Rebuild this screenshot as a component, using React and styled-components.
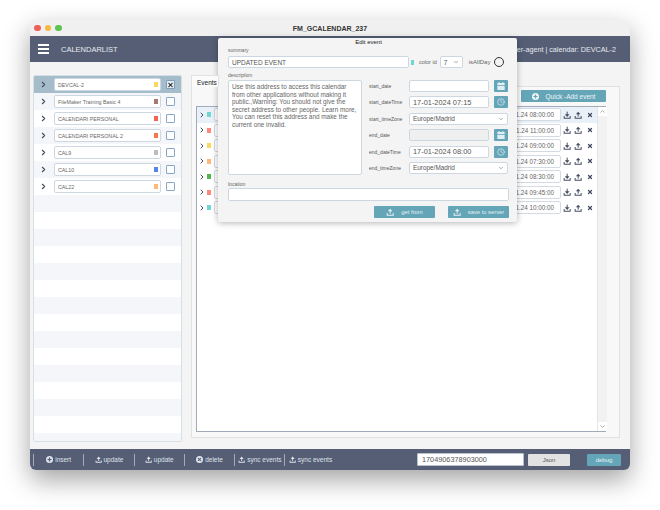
import React from 'react';
import styled, { createGlobalStyle } from 'styled-components';
import { ChevronRight, ChevronDown, ChevronUp, X, Clock } from 'lucide-react';

const GlobalStyle = createGlobalStyle`
  html, body {
    margin: 0;
    padding: 0;
    background: #fff;
    font-family: "Liberation Sans", Arial, sans-serif;
  }
`;

const Page = styled.div`
  width: 660px;
  height: 510px;
  padding: 20px 30px 40px;
  box-sizing: border-box;
  overflow: hidden;
`;

const Window = styled.div`
  position: relative;
  width: 600px;
  height: 450px;
  display: flex;
  flex-direction: column;
  background: #f4f4f4;
  border-radius: 6px;
  box-shadow: 0 10px 26px rgba(0, 0, 0, 0.36);
  overflow: hidden;
`;

const TitleBar = styled.div`
  position: relative;
  height: 16px;
  flex: none;
  display: flex;
  align-items: center;
  justify-content: center;
  background: #f0f0f0;
  font-size: 7px;
  font-weight: bold;
  color: #333;
`;

const Lights = styled.div`
  position: absolute;
  left: 4px;
  top: 4.5px;
  display: flex;
  gap: 4px;
`;

const Light = styled.span`
  width: 6.5px;
  height: 6.5px;
  border-radius: 50%;
  background: ${(p) => p.$color};
`;

const Header = styled.div`
  height: 26px;
  flex: none;
  display: flex;
  align-items: center;
  padding: 0 14px 0 8px;
  background: #555e75;
  color: #e8ebf0;
`;

const Burger = styled.div`
  width: 11px;
  display: flex;
  flex-direction: column;
  gap: 2px;
  margin-right: 12px;
  span {
    height: 2px;
    background: #fff;
  }
`;

const HeaderTitle = styled.div`
  font-size: 7.5px;
  flex: 1;
`;

const HeaderInfo = styled.div`
  font-size: 7.2px;
`;

const Body = styled.div`
  flex: 1;
  display: flex;
  min-height: 0;
  padding: 13px 10px 7px 3px;
  gap: 9px;
`;

const ListPanel = styled.div`
  width: 149px;
  height: 367px;
  flex: none;
  box-sizing: border-box;
  background: #fff;
  border: 1px solid #d5dfe6;
  border-radius: 2px;
  overflow: hidden;
`;

const CalRow = styled.div`
  height: 17px;
  display: flex;
  align-items: center;
  padding-left: 5px;
  background: ${(p) => (p.$active ? '#a5bccb' : p.$striped ? '#f4f6f9' : '#fff')};
`;

const Arrow = styled(ChevronRight)`
  flex: none;
  color: #474f64;
`;

const CalName = styled.div`
  width: 107px;
  height: 13px;
  margin-left: 6px;
  box-sizing: border-box;
  display: flex;
  align-items: center;
  justify-content: space-between;
  padding: 0 2px 0 3px;
  background: #fff;
  border: 1px solid #cdd7e2;
  border-radius: 2px;
  font-size: 5.3px;
  color: #666;
`;

const Swatch = styled.span`
  width: ${(p) => p.$w || 4}px;
  height: ${(p) => p.$h || 5}px;
  margin-left: ${(p) => p.$ml || 0}px;
  flex: none;
  background: ${(p) => p.$color};
`;

const Check = styled.div`
  width: 9px;
  height: 9px;
  margin-left: 5px;
  display: flex;
  align-items: center;
  justify-content: center;
  box-sizing: border-box;
  background: ${(p) => (p.$on ? '#e4e9ee' : '#fff')};
  border: 1px solid ${(p) => (p.$on ? '#7f9dbd' : '#8aa6c8')};
  border-radius: 1px;
  color: #111;
`;

const EventsPanel = styled.div`
  width: 429px;
  height: 363px;
  flex: none;
  display: flex;
  flex-direction: column;
`;

const Tab = styled.div`
  width: 28px;
  height: 12px;
  flex: none;
  box-sizing: border-box;
  padding: 3px 0 0 5px;
  margin-bottom: -1px;
  position: relative;
  z-index: 1;
  background: #fbfbfb;
  border: 1px solid #dfe2e5;
  border-bottom: none;
  font-size: 6.5px;
  line-height: 7px;
  color: #222;
`;

const TabBody = styled.div`
  flex: 1;
  box-sizing: border-box;
  display: flex;
  flex-direction: column;
  padding: 3px 13px 5px 4px;
  border: 1px solid #dfe2e5;
  background: #f8f8f8;
`;

const TabTools = styled.div`
  height: 16px;
  flex: none;
  display: flex;
  justify-content: flex-end;
  align-items: flex-start;
`;

const QuickAdd = styled.div`
  width: 85px;
  height: 12px;
  display: flex;
  align-items: center;
  justify-content: center;
  gap: 7px;
  background: #64a5b8;
  border-radius: 1px;
  color: #eef5f7;
  font-size: 6.5px;
`;

const EventsBox = styled.div`
  flex: 1;
  box-sizing: border-box;
  display: flex;
  background: #fff;
  border: 1px solid #a3abbb;
`;

const EventList = styled.div`
  flex: 1;
`;

const EventRow = styled.div`
  height: 15.5px;
  display: flex;
  align-items: center;
  padding-left: 1px;
  background: ${(p) => (p.$active ? '#e9f0f8' : '#fff')};
`;

const EventStart = styled.div`
  width: 347px;
  height: 13px;
  margin-left: 3px;
  box-sizing: border-box;
  display: flex;
  align-items: center;
  justify-content: flex-end;
  padding-right: 6px;
  background: #fff;
  border: 1px solid #d3dae3;
  border-radius: 2px;
  font-size: 6.3px;
  color: #666;
`;

const RowActions = styled.div`
  width: 36px;
  flex: none;
  display: flex;
  align-items: center;
  padding-left: 2px;
  box-sizing: border-box;
  gap: 3px;
  color: #454d61;
`;

const RowRemove = styled(X)`
  margin-left: 2px;
`;

const ScrollTrack = styled.div`
  width: 9px;
  flex: none;
  display: flex;
  flex-direction: column;
  justify-content: space-between;
  align-items: center;
  background: #f2f2f2;
  border-left: 1px solid #e4e4e4;
  color: #777;
`;

const ScrollEnd = styled.div`
  width: 100%;
  height: 9px;
  display: flex;
  align-items: center;
  justify-content: center;
  background: #fff;
`;

const Footer = styled.div`
  height: 21px;
  flex: none;
  display: flex;
  align-items: center;
  padding-left: 3px;
  background: #555e75;
  color: #dfe3ea;
`;

const FootItem = styled.div`
  width: ${(p) => p.$w || 50.3}px;
  height: 12px;
  box-sizing: border-box;
  display: flex;
  align-items: center;
  justify-content: center;
  gap: 2px;
  border-left: 1px solid #a5abb9;
  font-size: 6.5px;
  &:last-of-type {
    border-right: 1px solid #a5abb9;
  }
`;

const FootSpacer = styled.div`
  flex: 1;
`;

const StampInput = styled.div`
  width: 107px;
  height: 13px;
  box-sizing: border-box;
  display: flex;
  align-items: center;
  padding-left: 4px;
  background: #fff;
  border: 1px solid #b9c1cf;
  border-radius: 1px;
  font-size: 7.3px;
  color: #555;
`;

const JsonButton = styled.div`
  width: 42px;
  height: 12px;
  margin-left: 4px;
  display: flex;
  align-items: center;
  justify-content: center;
  background: #e2e2e2;
  border-radius: 1px;
  font-size: 6px;
  color: #555;
`;

const DebugButton = styled.div`
  width: 34px;
  height: 12px;
  margin: 0 9px 0 17px;
  display: flex;
  align-items: center;
  justify-content: center;
  background: #64a5b8;
  border-radius: 1px;
  font-size: 6px;
  color: #e8f2f5;
`;

const Modal = styled.div`
  position: absolute;
  left: 188px;
  top: 18px;
  width: 299px;
  height: 184px;
  box-sizing: border-box;
  padding: 1px 8px 0 10px;
  background: #f4f4f4;
  border-radius: 2px;
  box-shadow: 0 1px 6px rgba(0, 0, 0, 0.3);
  color: #666;
`;

const ModalTitle = styled.div`
  height: 8px;
  line-height: 7px;
  text-align: center;
  font-size: 6px;
  color: #222;
`;

const SmallLabel = styled.div`
  font-size: 5px;
  line-height: 7px;
  height: 7px;
  color: #666;
`;

const TopRow = styled.div`
  display: flex;
  align-items: center;
  height: 12px;
  margin-top: 2px;
`;

const Field = styled.div`
  width: ${(p) => p.$w}px;
  height: ${(p) => p.$h || 12}px;
  margin-left: ${(p) => p.$ml || 0}px;
  flex: none;
  box-sizing: border-box;
  display: flex;
  align-items: center;
  justify-content: space-between;
  padding: 0 3px;
  background: ${(p) => (p.$disabled ? '#efefef' : '#fff')};
  border: 1px solid #cdd7e2;
  border-radius: 2px;
  font-size: ${(p) => p.$size || 6.5}px;
  color: #555;
`;

const InlineLabel = styled.span`
  font-size: ${(p) => p.$size || 5.5}px;
  color: #666;
  margin-left: ${(p) => p.$ml || 0}px;
`;

const Circle = styled.span`
  width: 10px;
  height: 10px;
  margin-left: 4px;
  flex: none;
  box-sizing: border-box;
  border: 1px solid #333;
  border-radius: 50%;
`;

const FormBody = styled.div`
  display: flex;
  margin-top: 4px;
`;

const DescColumn = styled.div`
  width: 134px;
  flex: none;
`;

const DescText = styled.div`
  height: 95px;
  margin-top: 1px;
  box-sizing: border-box;
  padding: 2px 3px;
  background: #fff;
  border: 1px solid #cdd7e2;
  border-radius: 2px;
  font-size: 6.4px;
  line-height: 7.6px;
  color: #666;
`;

const SideColumn = styled.div`
  flex: 1;
  display: flex;
  flex-direction: column;
  gap: 4.4px;
  padding: 8px 0 0 7px;
`;

const SideRow = styled.div`
  height: 12px;
  display: flex;
  align-items: center;
`;

const SideLabel = styled.span`
  width: 40px;
  flex: none;
  font-size: 5px;
  color: #555;
`;

const IconButton = styled.div`
  width: 14px;
  height: 12px;
  margin-left: 5px;
  flex: none;
  display: flex;
  align-items: center;
  justify-content: center;
  background: #64a5b8;
  border-radius: 1px;
  color: #dfeff3;
`;

const LocationBlock = styled.div`
  margin-top: 6px;
`;

const ModalActions = styled.div`
  display: flex;
  justify-content: flex-end;
  gap: 13px;
  margin-top: 5px;
`;

const ActionButton = styled.div`
  width: 61px;
  height: 12px;
  display: flex;
  align-items: center;
  justify-content: center;
  gap: 7px;
  background: #64a5b8;
  border-radius: 1px;
  font-size: 5.8px;
  color: #e6f1f4;
`;

const UploadIcon = ({ size = 8, down }) => (
  <svg width={size} height={size} viewBox="0 0 24 24" fill="currentColor" aria-hidden="true">
    <rect x="11" y={down ? 2 : 6} width="3" height="11" />
    {down ? <path d="M5.5 10h14l-7 8z" /> : <path d="M5.5 10h14l-7-8z" />}
    <path d="M2 15h3v5h15v-5h3v8H2z" />
  </svg>
);

const PlusCircle = ({ size = 7, cut = '#555e75' }) => (
  <svg width={size} height={size} viewBox="0 0 24 24" aria-hidden="true">
    <circle cx="12" cy="12" r="12" fill="currentColor" />
    <path d="M10 5h4v5h5v4h-5v5h-4v-5H5v-4h5z" fill={cut} />
  </svg>
);

const CrossCircle = ({ size = 7 }) => (
  <svg width={size} height={size} viewBox="0 0 24 24" aria-hidden="true">
    <circle cx="12" cy="12" r="12" fill="currentColor" />
    <path d="M7 7l10 10M17 7L7 17" stroke="#555e75" strokeWidth="3.5" />
  </svg>
);

const CalendarIcon = () => (
  <svg width="8" height="8" viewBox="0 0 24 24" fill="currentColor" aria-hidden="true">
    <rect x="5" y="0" width="3" height="5" />
    <rect x="16" y="0" width="3" height="5" />
    <path d="M1 3h22v6H1zM1 11h22v13H1z" />
  </svg>
);

const calendars = [
  { name: 'DEVCAL-2', color: '#fbd75b', active: true },
  { name: 'FileMaker Training Basic 4', color: '#a47a6e', striped: true },
  { name: 'CALENDARI PERSONAL', color: '#f4664f' },
  { name: 'CALENDARI PERSONAL 2', color: '#f4794f', striped: true },
  { name: 'CAL9', color: '#bdbdbd' },
  { name: 'CAL10', color: '#5484ed', striped: true },
  { name: 'CAL22', color: '#ffb878' },
];

const events = [
  { color: '#6fd6d6', time: '1.24 08:00:00', active: true },
  { color: '#ff887c', time: '1.24 11:00:00' },
  { color: '#fbd75b', time: '1.24 09:00:00' },
  { color: '#ffb878', time: '1.24 07:30:00' },
  { color: '#51b749', time: '1.24 08:30:00' },
  { color: '#ff887c', time: '1.24 09:45:00' },
  { color: '#6fd6d6', time: '1.24 10:00:00' },
];

const emptyRows = Array.from({ length: 15 }, (_, i) => i);

const description =
  'Use this address to access this calendar from other applications without making it public.,Warning: You should not give the secret address to other people. Learn more, You can reset this address and make the current one invalid.';

export default function App() {
  return (
    <Page>
      <GlobalStyle />
      <Window>
        <TitleBar>
          <Lights>
            <Light $color="#ee5f57" />
            <Light $color="#f6b83d" />
            <Light $color="#5fc34f" />
          </Lights>
          FM_GCALENDAR_237
        </TitleBar>

        <Header>
          <Burger>
            <span />
            <span />
            <span />
          </Burger>
          <HeaderTitle>CALENDARLIST</HeaderTitle>
          <HeaderInfo>user-agent | calendar: DEVCAL-2</HeaderInfo>
        </Header>

        <Body>
          <ListPanel>
            {calendars.map((cal) => (
              <CalRow key={cal.name} $active={cal.active} $striped={cal.striped}>
                <Arrow size={9} strokeWidth={3} />
                <CalName>
                  {cal.name}
                  <Swatch $color={cal.color} />
                </CalName>
                <Check $on={cal.active}>{cal.active && <X size={8} strokeWidth={3.5} />}</Check>
              </CalRow>
            ))}
            {emptyRows.map((i) => (
              <CalRow key={i} $striped={i % 2 === 0} />
            ))}
          </ListPanel>

          <EventsPanel>
            <Tab>Events</Tab>
            <TabBody>
              <TabTools>
                <QuickAdd>
                  <PlusCircle cut="#64a5b8" />
                  Quick -Add event
                </QuickAdd>
              </TabTools>
              <EventsBox>
                <EventList>
                  {events.map((ev) => (
                    <EventRow key={ev.time} $active={ev.active}>
                      <Arrow size={8} strokeWidth={3} />
                      <Swatch $color={ev.color} $ml={1} />
                      <EventStart>{ev.time}</EventStart>
                      <RowActions>
                        <UploadIcon size={8} down />
                        <UploadIcon size={8} />
                        <RowRemove size={6} strokeWidth={5} />
                      </RowActions>
                    </EventRow>
                  ))}
                </EventList>
                <ScrollTrack>
                  <ScrollEnd>
                    <ChevronUp size={7} />
                  </ScrollEnd>
                  <ScrollEnd>
                    <ChevronDown size={7} />
                  </ScrollEnd>
                </ScrollTrack>
              </EventsBox>
            </TabBody>
          </EventsPanel>
        </Body>

        <Footer>
          <FootItem>
            <PlusCircle /> insert
          </FootItem>
          <FootItem>
            <UploadIcon size={7} /> update
          </FootItem>
          <FootItem>
            <UploadIcon size={7} /> update
          </FootItem>
          <FootItem>
            <CrossCircle /> delete
          </FootItem>
          <FootItem>
            <UploadIcon size={7} /> sync events
          </FootItem>
          <FootItem $w={51}>
            <UploadIcon size={7} /> sync events
          </FootItem>
          <FootSpacer />
          <StampInput>1704906378903000</StampInput>
          <JsonButton>Json</JsonButton>
          <DebugButton>debug</DebugButton>
        </Footer>

        <Modal>
          <ModalTitle>Edit event</ModalTitle>
          <SmallLabel>summary</SmallLabel>
          <TopRow>
            <Field $w={181} $h={12}>UPDATED EVENT</Field>
            <Swatch $color="#6fd6d6" $w={3} $h={5} $ml={2} />
            <InlineLabel $ml={5}>color id</InlineLabel>
            <Field $w={23} $h={12} $ml={3}>
              7 <ChevronDown size={6} />
            </Field>
            <InlineLabel $ml={6} $size={6}>isAllDay</InlineLabel>
            <Circle />
          </TopRow>
          <FormBody>
            <DescColumn>
              <SmallLabel>description</SmallLabel>
              <DescText>{description}</DescText>
            </DescColumn>
            <SideColumn>
              <SideRow>
                <SideLabel>start_date</SideLabel>
                <Field $w={80} />
                <IconButton><CalendarIcon /></IconButton>
              </SideRow>
              <SideRow>
                <SideLabel>start_dateTime</SideLabel>
                <Field $w={80} $size={7.4}>17-01-2024 07:15</Field>
                <IconButton><Clock size={8} /></IconButton>
              </SideRow>
              <SideRow>
                <SideLabel>start_timeZone</SideLabel>
                <Field $w={99} $size={6.4}>Europe/Madrid <ChevronDown size={6} /></Field>
              </SideRow>
              <SideRow>
                <SideLabel>end_date</SideLabel>
                <Field $w={80} $disabled />
                <IconButton><CalendarIcon /></IconButton>
              </SideRow>
              <SideRow>
                <SideLabel>end_dateTime</SideLabel>
                <Field $w={80} $size={7.4}>17-01-2024 08:00</Field>
                <IconButton><Clock size={8} /></IconButton>
              </SideRow>
              <SideRow>
                <SideLabel>end_timeZone</SideLabel>
                <Field $w={99} $size={6.4}>Europe/Madrid <ChevronDown size={6} /></Field>
              </SideRow>
            </SideColumn>
          </FormBody>
          <LocationBlock>
            <SmallLabel>location</SmallLabel>
            <Field $w={281} $h={13} />
          </LocationBlock>
          <ModalActions>
            <ActionButton><UploadIcon size={8} /> get from</ActionButton>
            <ActionButton><UploadIcon size={8} /> save to server</ActionButton>
          </ModalActions>
        </Modal>
      </Window>
    </Page>
  );
}
